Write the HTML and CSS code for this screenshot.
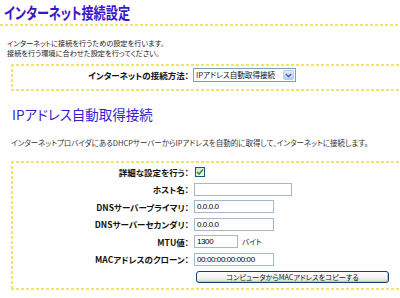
FILE: index.html
```html
<!DOCTYPE html>
<html lang="ja">
<head>
<meta charset="utf-8">
<title>インターネット接続設定</title>
<link rel="stylesheet" href="styles.css">
</head>
<body>
<div class="page">
  <h1 class="title"><span class="title-text">インターネット接続設定</span></h1>
  <p class="intro">インターネットに接続を行うための設定を行います。<br>接続を行う環境に合わせた設定を行ってください。</p>

  <div class="box box-method">
    <div class="form-grid">
      <span class="label">インターネットの接続方法：</span>
      <div class="select">
        <span class="select-text">IPアドレス自動取得接続</span>
        <span class="select-btn"><svg width="7" height="5" viewBox="0 0 7 5"><path d="M0.8 1 L3.5 3.6 L6.2 1" fill="none" stroke="#4d6185" stroke-width="1.4"/></svg></span>
      </div>
    </div>
  </div>

  <h2 class="subtitle">IPアドレス自動取得接続</h2>
  <p class="desc">インターネットプロバイダにあるDHCPサーバーからIPアドレスを自動的に取得して、インターネットに接続します。</p>

  <div class="box box-form">
    <div class="form-grid rows">
      <span class="label">詳細な設定を行う：</span>
      <span class="control"><span class="checkbox"><svg width="8" height="8" viewBox="0 0 8 8"><path d="M1 4 L3 6 L7 1.5" fill="none" stroke="#21a121" stroke-width="1.6"/></svg></span></span>

      <span class="label">ホスト名：</span>
      <span class="control"><span class="input w-host"></span></span>

      <span class="label">DNSサーバープライマリ：</span>
      <span class="control"><span class="input w-mid">0.0.0.0</span></span>

      <span class="label">DNSサーバーセカンダリ：</span>
      <span class="control"><span class="input w-mid">0.0.0.0</span></span>

      <span class="label">MTU値：</span>
      <span class="control"><span class="input w-mtu">1300</span><span class="unit">バイト</span></span>

      <span class="label">MACアドレスのクローン：</span>
      <span class="control"><span class="input w-mid">00:00:00:00:00:00</span></span>

      <span class="label"></span>
      <span class="control"><span class="button">コンピュータからMACアドレスをコピーする</span></span>
    </div>
  </div>
</div>
</body>
</html>
```

FILE: styles.css
```css
html, body {
  margin: 0;
  padding: 0;
  background: #ffffff;
  overflow: hidden;
}

body {
  font-family: "Noto Sans CJK JP", "Noto Sans", sans-serif;
  font-feature-settings: "palt" 1;
  color: #222;
}

.page {
  width: 400px;
  height: 298px;
  overflow: hidden;
}

.title {
  margin: 0;
  padding: 2px 0 3px 4px;
  font-size: 16px;
  line-height: 21px;
  font-weight: bold;
  color: #3a14c8;
  white-space: nowrap;
  background-image: repeating-linear-gradient(to right, #f1e46a 0 3px, transparent 3px 5px);
  background-size: 100% 2px;
  background-position: left bottom;
  background-repeat: no-repeat;
}

.title-text {
  display: inline-block;
  transform: scaleX(0.76);
  transform-origin: left center;
}

.intro {
  margin: 12px 0 0 0;
  padding-left: 7px;
  font-size: 7.2px;
  line-height: 10px;
  color: #1a1a1a;
  white-space: nowrap;
}

.box {
  margin-left: 11px;
  background-image:
    repeating-linear-gradient(to right, #f1e46a 0 3px, transparent 3px 5px),
    repeating-linear-gradient(to right, #f1e46a 0 3px, transparent 3px 5px),
    repeating-linear-gradient(to bottom, #f1e46a 0 3px, transparent 3px 5px);
  background-size: 100% 2px, 100% 2px, 2px 100%;
  background-position: left top, left bottom, left top;
  background-repeat: no-repeat;
}

.box-method {
  margin-top: 6px;
  padding: 4px 0 9px 2px;
}

.form-grid {
  display: grid;
  grid-template-columns: 176px auto;
  column-gap: 5px;
  align-items: center;
}

.box-method .form-grid {
  column-gap: 4px;
}

.rows {
  grid-auto-rows: 17.5px;
}

.label {
  text-align: right;
  font-size: 8.5px;
  font-weight: bold;
  color: #111;
  line-height: 12px;
  white-space: nowrap;
}

.select {
  display: flex;
  align-items: center;
  width: 103px;
  height: 14px;
  box-sizing: border-box;
  border: 1px solid #7f9db9;
  background: #fff;
  padding: 0 1px 0 2px;
}

.select-text {
  flex: 1;
  font-size: 7.6px;
  line-height: 12px;
  color: #111;
  white-space: nowrap;
  overflow: hidden;
}

.select-btn {
  width: 11px;
  height: 10px;
  box-sizing: border-box;
  border: 1px solid #b8cbf2;
  border-radius: 2px;
  background: linear-gradient(to bottom, #e2eafe, #b7cbf6);
  display: flex;
  align-items: center;
  justify-content: center;
}

.subtitle {
  margin: 14px 0 0 0;
  padding-left: 12px;
  font-size: 13.5px;
  line-height: 18px;
  font-weight: normal;
  color: #3a1cd0;
}

.desc {
  margin: 15px 0 0 0;
  padding-left: 11px;
  font-size: 7.5px;
  line-height: 10px;
  color: #333;
  white-space: nowrap;
}

.box-form {
  margin-top: 13px;
  padding: 2px 0 4px 2px;
}

.control {
  display: flex;
  align-items: center;
}

.checkbox {
  width: 10px;
  height: 10px;
  box-sizing: border-box;
  border: 1px solid #1c5180;
  background: linear-gradient(135deg, #dcdcd7, #ffffff);
  display: flex;
  align-items: center;
  justify-content: center;
  margin-left: 1px;
}

.input {
  height: 13px;
  box-sizing: border-box;
  border: 1px solid #a3b7cf;
  background: #fff;
  font-family: "Liberation Sans", sans-serif;
  font-size: 8px;
  letter-spacing: -0.4px;
  line-height: 11px;
  padding-left: 2px;
  color: #000;
  white-space: nowrap;
}

.w-host { width: 98px; }
.w-mid { width: 80px; }
.w-mtu { width: 44px; }

.unit {
  margin-left: 4px;
  font-size: 7.6px;
  line-height: 12px;
  color: #222;
}

.button {
  width: 193px;
  height: 12px;
  box-sizing: border-box;
  margin-left: 2px;
  border: 1px solid #1a3e6c;
  border-radius: 3px;
  background: linear-gradient(to bottom, #ffffff, #f2f2ee 60%, #dcdcd4);
  box-shadow: inset -1px -1px 0 #c9c6b8;
  font-size: 7.2px;
  line-height: 10px;
  text-align: center;
  color: #111;
  white-space: nowrap;
}
```
